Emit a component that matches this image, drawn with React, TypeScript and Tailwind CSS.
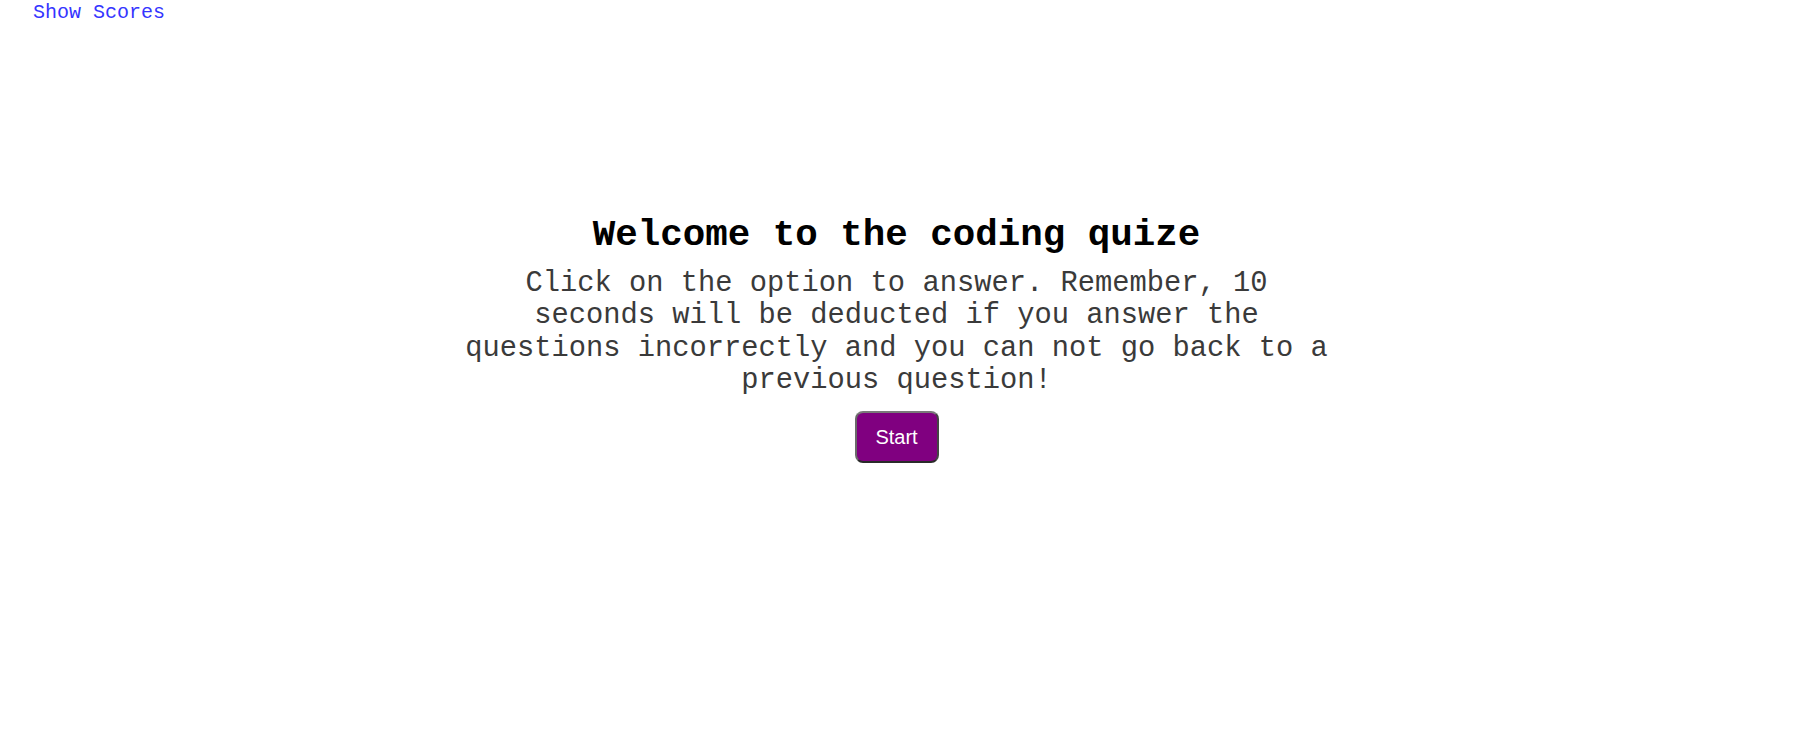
import React from "react";

export default function App() {
  return (
    <div className="min-h-[738px] bg-white" style={{ fontFamily: '"Liberation Mono", "Courier New", monospace' }}>
      <div className="pl-[33px] pt-[1px]">
        <a className="text-[20px] leading-[23px] text-[#3535ff] cursor-pointer">Show Scores</a>
      </div>
      <div className="flex flex-col items-center pt-[188px] pr-[14px]">
        <h1 className="text-[37.5px] font-bold leading-[42.5px] text-black">Welcome to the coding quize</h1>
        <p className="mt-[11px] w-[870px] text-center text-[28.75px] leading-[32.6px] text-[#3a3a3a]">
          Click on the option to answer. Remember, 10 seconds will be deducted if you answer the questions incorrectly and you can not go back to a previous question!
        </p>
        <button
          className="mt-[13px] h-[52px] w-[84px] rounded-[8px] border-[2.5px] border-t-[#7a7a7a] border-l-[#6a6a6a] border-r-[#444] border-b-[#2a2a2a] bg-[#800080] text-[20px] text-white"
          style={{ fontFamily: '"Liberation Sans", Arial, sans-serif' }}
        >
          Start
        </button>
      </div>
    </div>
  );
}
